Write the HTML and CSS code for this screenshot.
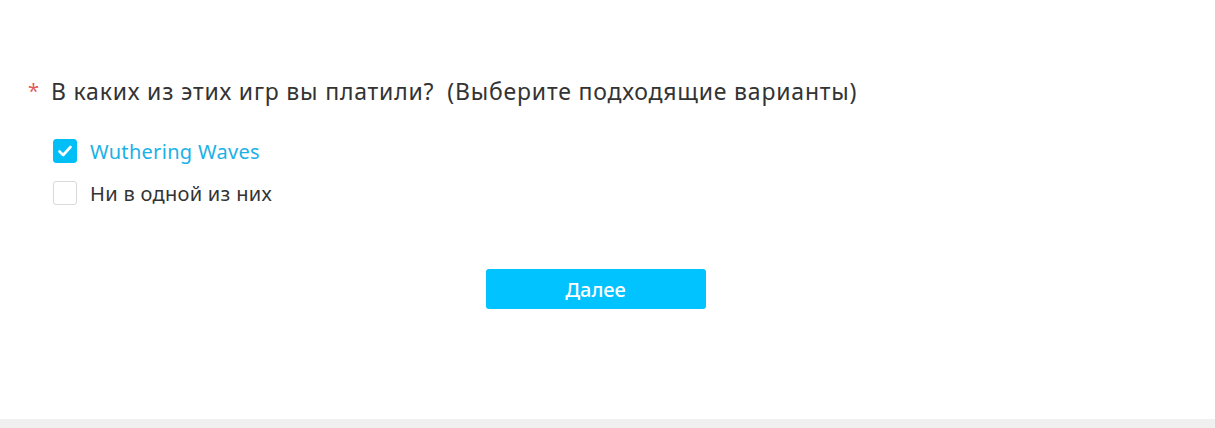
FILE: index.html
```html
<!DOCTYPE html>
<html lang="ru">
<head>
    <meta charset="UTF-8">
    <meta name="viewport" content="width=device-width, initial-scale=1.0">
    <title>Опрос</title>
    <link rel="stylesheet" href="styles.css">
</head>
<body>
    <div class="page">
        <div class="question">
            <div class="question-title">
                <span class="required">*</span>
                <span>В каких из этих игр вы платили?</span>
                <span class="hint">(Выберите подходящие варианты)</span>
            </div>
            <ul class="options">
                <li class="option checked">
                    <span class="box">
                        <svg width="18" height="18" viewBox="0 0 18 18"><path d="M3.5 9.5 L7.2 13 L14.5 5" fill="none" stroke="#fff" stroke-width="2.6" stroke-linecap="round" stroke-linejoin="round"/></svg>
                    </span>
                    <span class="label">Wuthering Waves</span>
                </li>
                <li class="option">
                    <span class="box"></span>
                    <span class="label">Ни в одной из них</span>
                </li>
            </ul>
        </div>
        <div class="actions">
            <button class="next">Далее</button>
        </div>
    </div>
    <div class="footer"></div>
</body>
</html>
```

FILE: styles.css
```css
html, body {
    margin: 0;
    height: 100%;
}
body {
    font-family: "Noto Sans", "Open Sans", sans-serif;
    background-color: #fff;
    color: #333;
    display: flex;
    flex-direction: column;
}
.page {
    flex: 1;
    padding: 75px 52px 0 28px;
}
.question-title {
    font-size: 23px;
    letter-spacing: 0.8px;
    line-height: 32px;
    display: flex;
    align-items: center;
}
.required {
    color: #e05c5c;
    width: 23px;
    font-size: 20px;
    letter-spacing: 0;
}
.hint {
    margin-left: 13px;
}
.options {
    list-style: none;
    margin: 23px 0 0;
    padding: 0 0 0 25px;
}
.option {
    display: flex;
    align-items: center;
    height: 42px;
    font-size: 20px;
    letter-spacing: 0.3px;
}
.box {
    width: 24px;
    height: 24px;
    border: 1px solid #d9d9d9;
    border-radius: 3px;
    box-sizing: border-box;
    display: flex;
    align-items: center;
    justify-content: center;
    margin-right: 13px;
}
.option.checked .box {
    background: #00bff7;
    border-color: #00bff7;
}
.option.checked .label {
    color: #1bb1e6;
}
.actions {
    display: flex;
    justify-content: center;
    margin-top: 55px;
}
.next {
    width: 220px;
    height: 40px;
    border: none;
    border-radius: 3px;
    background: #00c3ff;
    color: #fff;
    font-family: inherit;
    font-size: 20px;
    font-weight: 500;
}
.footer {
    height: 9px;
    background: #f0f0f0;
}
```
